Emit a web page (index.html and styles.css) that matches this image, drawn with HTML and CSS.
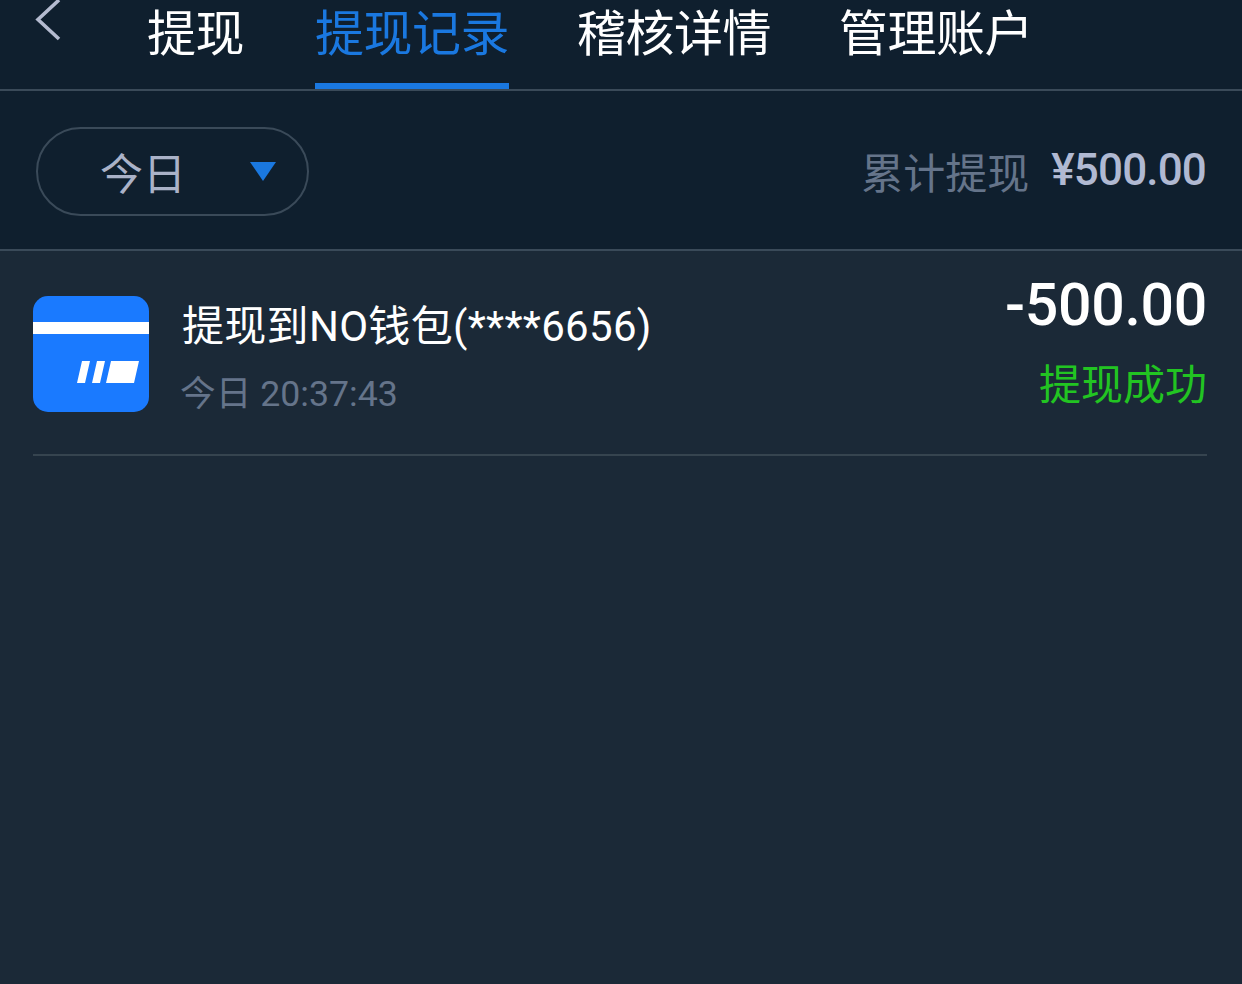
FILE: index.html
```html
<!DOCTYPE html>
<html lang="zh-CN">
<head>
  <meta charset="UTF-8" />
  <title>提现记录</title>
  <link rel="stylesheet" href="styles.css">
</head>
<body>

  <!-- Top tabs -->
  <div class="tabs">
    <svg class="back" width="30" height="42" viewBox="0 0 30 42">
      <path d="M26 1 L5 20.5 L26 40" fill="none" stroke="#b4bbd0" stroke-width="3.6" />
    </svg>
    <div class="tab tab-first">提现</div>
    <div class="tab active">提现记录</div>
    <div class="tab">稽核详情</div>
    <div class="tab">管理账户</div>
  </div>

  <!-- Filter bar -->
  <div class="filter-bar">
    <div class="select">
      <span class="select-text">今日</span>
      <svg class="select-arrow" width="26" height="19" viewBox="0 0 26 19">
        <path d="M0 0 H26 L13 19 Z" fill="#1a78e0" />
      </svg>
    </div>
    <div class="total">
      <span class="total-label">累计提现</span>
      <span class="total-value">¥500.00</span>
    </div>
  </div>

  <!-- Records -->
  <div class="list">
    <div class="record">
      <svg class="record-icon" width="116" height="116" viewBox="0 0 116 116">
        <rect width="116" height="116" rx="15" fill="#1a7aff" />
        <rect y="26" width="116" height="12" fill="#fff" />
        <path d="M49 65 H57 L52 87 H44 Z M64 65 H72 L67 87 H59 Z M78 65 H106 L101 87 H73 Z" fill="#fff" />
      </svg>
      <div class="record-info">
        <div class="record-title">提现到NO钱包(****6656)</div>
        <div class="record-time">今日 20:37:43</div>
      </div>
      <div class="record-side">
        <div class="record-amount">-500.00</div>
        <div class="record-status">提现成功</div>
      </div>
    </div>
  </div>

</body>
</html>
```

FILE: styles.css
```css
* {
  box-sizing: border-box;
}

html, body {
  height: 100%;
}

body {
  margin: 0;
  background: #1b2937;
  font-family: "Roboto", "Noto Sans CJK SC", sans-serif;
  overflow: hidden;
}

.tabs {
  display: flex;
  height: 91px;
  padding-left: 33px;
  background: #0f1f2e;
  border-bottom: 2px solid #3a4a59;
}

.back {
  margin-right: 84px;
  flex-shrink: 0;
  margin-top: -1px;
}

.tab {
  height: 89px;
  margin-right: 68px;
  font-size: 49px;
  letter-spacing: -0.5px;
  line-height: 70px;
  color: #fff;
  white-space: nowrap;
}

.tab-first {
  margin-right: 71px;
}

.tab.active {
  color: #1a78e0;
  border-bottom: 6px solid #1a78e0;
}

.filter-bar {
  display: flex;
  justify-content: space-between;
  align-items: center;
  height: 160px;
  padding: 0 36px;
  background: #0f1f2e;
  border-bottom: 2px solid #3a4a59;
}

.select {
  display: flex;
  align-items: center;
  width: 273px;
  height: 89px;
  margin-top: 2px;
  padding-left: 62px;
  border: 2px solid #3a4a59;
  border-radius: 45px;
}

.select-text {
  font-size: 43px;
  color: #aab2c8;
}

.select-arrow {
  margin-left: 64px;
  margin-top: 1px;
}

.total {
  display: flex;
  align-items: center;
  gap: 22px;
}

.total-label {
  font-size: 42px;
  color: #65748a;
}

.total-value {
  font-size: 44px;
  font-weight: 500;
  letter-spacing: -0.85px;
  color: #b0b9d2;
}

.list {
  padding: 0 35px 0 33px;
}

.record {
  display: flex;
  align-items: center;
  height: 205px;
  border-bottom: 2px solid #36444f;
}

.record-icon {
  flex-shrink: 0;
  margin-top: 2px;
}

.record-info {
  margin-left: 33px;
  margin-top: 12px;
  flex: 1;
}

.record-title {
  font-size: 42px;
  line-height: 56px;
  letter-spacing: 0.3px;
  color: #fff;
  white-space: nowrap;
}

.record-time {
  margin-top: 14px;
  margin-left: -2px;
  font-size: 35.7px;
  line-height: 50px;
  color: #65748a;
}

.record-side {
  text-align: right;
  margin-top: -21px;
}

.record-amount {
  font-size: 59px;
  font-weight: 500;
  line-height: 68px;
  letter-spacing: -0.3px;
  color: #fff;
}

.record-status {
  margin-top: 19px;
  font-size: 42px;
  line-height: 56px;
  color: #22c422;
}
```
